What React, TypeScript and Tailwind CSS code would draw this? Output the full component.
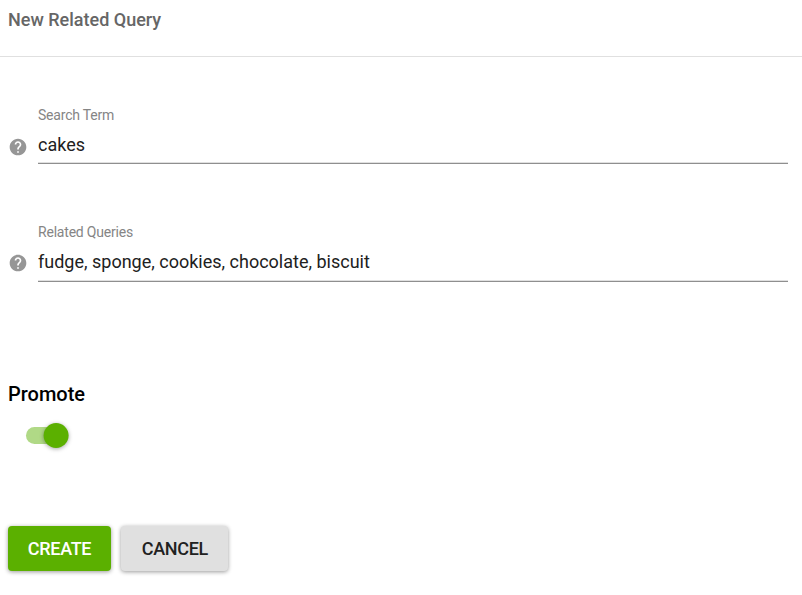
import { MdHelp } from "react-icons/md";

type FieldProps = { label: string; value: string; tall?: boolean };

function Field({ label, value, tall = false }: FieldProps) {
  return (
    <div className="flex items-end pl-2 pr-[14px]">
      <MdHelp className={`mr-[10px] size-5 shrink-0 text-[#969696] ${tall ? "mb-[9px]" : "mb-[7px]"}`} />
      <label className="flex flex-1 flex-col border-b border-[#8f8f8f] shadow-[inset_0_-1px_0_#e0e0e0]">
        <span className="text-[14px] leading-[18px] tracking-[-0.2px] text-[#858585]">{label}</span>
        <input
          className={`mt-[5px] bg-transparent text-[18px] leading-6 text-[#212121] outline-none ${tall ? "h-[35px] pb-[5px]" : "h-[34px] pb-[4px]"}`}
          defaultValue={value}
        />
      </label>
    </div>
  );
}

export default function App() {
  return (
    <main className="flex h-[595px] w-[802px] flex-col bg-white font-['Roboto',sans-serif]">
      <header className="h-[57px] border-b border-[#e0e0e0] pl-2 pt-2">
        <h1 className="text-[18px] font-medium leading-6 text-[#666666]">New Related Query</h1>
      </header>
      <div className="pt-[49px]">
        <Field label="Search Term" value="cakes" />
      </div>
      <div className="pt-[59px]">
        <Field label="Related Queries" value="fudge, sponge, cookies, chocolate, biscuit" tall />
      </div>
      <section className="pl-2 pt-[100px]">
        <h2 className="text-[20px] font-medium leading-6 text-black">Promote</h2>
        <button role="switch" aria-checked="true" aria-label="Promote" className="ml-[18px] mt-[17px] flex h-[25px] w-[43px] items-center">
          <span className="h-[17px] w-[40px] shrink-0 rounded-full bg-[#b0d986]" />
          <span className="-ml-[23px] size-[25px] shrink-0 translate-x-[0.6px] rounded-full bg-[#5bb000] shadow-[0_1px_4px_rgba(0,0,0,0.35)]" />
        </button>
      </section>
      <div className="flex gap-[9.5px] pl-2 pt-[78px]">
        <button className="h-[45px] w-[103px] rounded-[4px] bg-[#5bb000] text-[18px] font-medium tracking-[-0.3px] text-white shadow-[0_1px_4px_rgba(0,0,0,0.4)]">CREATE</button>
        <button className="h-[45px] w-[107.7px] rounded-[4px] bg-[#e0e0e0] pl-px text-[18px] font-medium tracking-[-0.3px] text-[#212121] shadow-[0_1px_4px_rgba(0,0,0,0.4)]">CANCEL</button>
      </div>
    </main>
  );
}
